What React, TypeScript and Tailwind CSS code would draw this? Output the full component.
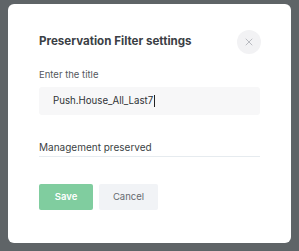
import { X } from 'lucide-react';

export default function App() {
  return (
    <div className="w-[299px] h-[251px] bg-[#5f6467] pt-[4px] px-[8px] overflow-hidden" style={{ fontFamily: 'Inter, "Noto Sans", sans-serif' }}>
      <div className="h-[239px] bg-white rounded-[6px] px-[31px] pt-[26px]">
        <div className="flex items-center justify-between">
          <h2 className="text-[11.6px] font-bold text-[#3b4045]">Preservation Filter settings</h2>
          <button className="w-[24px] h-[24px] rounded-full bg-[#f2f2f4] flex items-center justify-center mr-[-1px]">
            <X size={12} strokeWidth={1.4} className="text-[#a0a3aa]" />
          </button>
        </div>

        <label className="block mt-[14px] leading-[14px] text-[9.5px] text-[#55595e]">Enter the title</label>
        <div className="mt-[5px] h-[28px] rounded-[3px] bg-[#f7f7f8] flex items-center pl-[14px] text-[9.7px] text-[#2f3337]">
          Push.House_All_Last7<span className="inline-block w-[1px] h-[12px] bg-[#222] ml-[1px]" />
        </div>

        <div className="mt-[25px] pb-[1px] leading-[15px] border-b border-[#e6ebef] text-[10px] text-[#3b3f44]">Management preserved</div>

        <div className="mt-[27px] flex gap-[6px]">
          <button className="w-[54px] h-[26px] rounded-[2px] bg-[#80cd9f] text-white text-[9.5px] font-semibold">Save</button>
          <button className="w-[59px] h-[26px] rounded-[2px] bg-[#f1f3f6] text-[#666a70] text-[9.5px]">Cancel</button>
        </div>
      </div>
    </div>
  );
}
